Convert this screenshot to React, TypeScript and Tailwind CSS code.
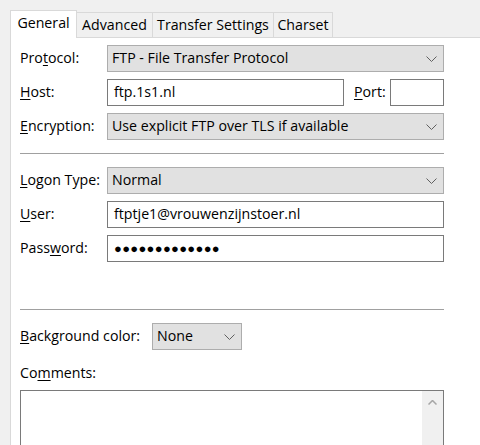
import React from 'react';

const Chevron: React.FC = () => (
  <svg width="11" height="6" viewBox="0 0 11 6" className="shrink-0">
    <polyline points="0.5,0.5 5.5,5.5 10.5,0.5" fill="none" stroke="#606060" strokeWidth="1" />
  </svg>
);

const Select: React.FC<{ value: string; className?: string }> = ({ value, className = '' }) => (
  <div
    className={`flex h-[27px] items-center justify-between border border-[#adadad] bg-[#e1e1e1] pl-[4px] pr-[6px] ${className}`}
  >
    <span>{value}</span>
    <Chevron />
  </div>
);

const Input: React.FC<{ value?: string; className?: string }> = ({ value = '', className = '' }) => (
  <div className={`flex h-[27px] items-center border border-[#7a7a7a] bg-white pl-[6px] ${className}`}>
    <span>{value}</span>
  </div>
);

const Label: React.FC<{ pre: string; key_: string; post: string; className?: string }> = ({
  pre,
  key_,
  post,
  className = ''
}) => (
  <span className={`whitespace-nowrap ${className}`}>
    {pre}
    <span className="underline underline-offset-2">{key_}</span>
    {post}
  </span>
);

const Row: React.FC<{ label: React.ReactNode; children: React.ReactNode }> = ({ label, children }) => (
  <div className="flex h-[27px] items-center">
    <div className="w-[87px] shrink-0">{label}</div>
    <div className="flex flex-1 items-center">{children}</div>
  </div>
);

const TABS = [
  { name: 'Advanced', w: 'w-[76px]' },
  { name: 'Transfer Settings', w: 'w-[121px]' },
  { name: 'Charset', w: 'w-[59px]' }
];

export default function App() {
  return (
    <div
      className="h-[445px] w-[480px] overflow-hidden bg-[#f0f0f0] pl-[10px] pt-[10px] text-[14.2px] leading-none text-black"
      style={{ fontFamily: '"Segoe UI", "Open Sans", "Noto Sans", sans-serif' }}
    >
      <div className="flex items-end">
        <div className="relative z-10 -mb-px flex h-[28px] w-[67px] items-center justify-center border-l border-r border-t border-[#d9d9d9] bg-white pb-[2px]">
          General
        </div>
        {TABS.map((t) => (
          <div
            key={t.name}
            className={`flex h-[25px] items-center justify-center border-r border-t border-[#d9d9d9] bg-[#f0f0f0] ${t.w}`}
          >
            {t.name}
          </div>
        ))}
      </div>

      <div className="h-full border-l border-t border-[#d9d9d9] bg-white pl-[9px] pr-[36px] pt-[7px]">
        <div className="flex flex-col gap-[7px]">
          <Row label={<Label pre="Pro" key_="t" post="ocol:" />}>
            <Select value="FTP - File Transfer Protocol" className="flex-1" />
          </Row>
          <Row label={<Label pre="" key_="H" post="ost:" />}>
            <Input value="ftp.1s1.nl" className="w-[237px]" />
            <Label pre="" key_="P" post="ort:" className="ml-[10px] w-[36px]" />
            <Input className="flex-1" />
          </Row>
          <Row label={<Label pre="" key_="E" post="ncryption:" />}>
            <Select value="Use explicit FTP over TLS if available" className="flex-1" />
          </Row>
        </div>

        <div className="mb-[13px] mt-[13px] h-px bg-[#a0a0a0]" />

        <div className="flex flex-col gap-[7px]">
          <Row label={<Label pre="" key_="L" post="ogon Type:" />}>
            <Select value="Normal" className="flex-1" />
          </Row>
          <Row label={<Label pre="" key_="U" post="ser:" />}>
            <Input value="ftptje1@vrouwenzijnstoer.nl" className="flex-1" />
          </Row>
          <Row label={<Label pre="Pass" key_="w" post="ord:" />}>
            <Input value="●●●●●●●●●●●●●" className="flex-1 text-[13px] tracking-[0.3px]" />
          </Row>
        </div>

        <div className="mb-[13px] mt-[47px] h-px bg-[#a0a0a0]" />

        <div className="flex h-[27px] items-center">
          <div className="w-[132px] shrink-0">
            <Label pre="" key_="B" post="ackground color:" />
          </div>
          <Select value="None" className="w-[90px]" />
        </div>

        <div className="mt-[16px] h-[14px]">
          <Label pre="Co" key_="m" post="ments:" />
        </div>

        <div className="mt-[10px] flex h-[80px] border border-[#7a7a7a] bg-white">
          <div className="flex-1" />
          <div className="flex w-[21px] justify-center bg-[#f0f0f0] pt-[9px]">
            <svg width="9" height="5" viewBox="0 0 9 5">
              <polyline points="0.5,4.5 4.5,0.5 8.5,4.5" fill="none" stroke="#a6a6a6" strokeWidth="1.5" />
            </svg>
          </div>
        </div>
      </div>
    </div>
  );
}
